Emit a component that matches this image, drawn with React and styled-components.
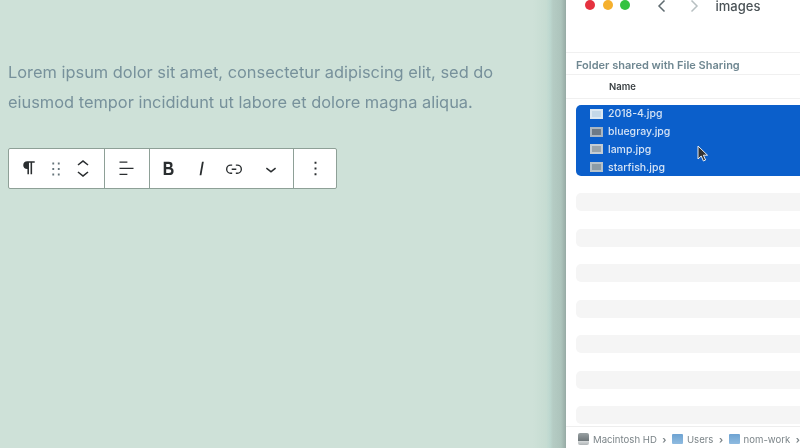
import React from "react";
import styled, { createGlobalStyle } from "styled-components";

const GlobalStyle = createGlobalStyle`
  html, body { margin: 0; padding: 0; height: 100%; overflow: hidden; }
  #root { height: 100%; }
  body { font-family: "Inter", "Liberation Sans", sans-serif; }
`;

const icons = {
  pilcrow: "M10 17.5h1.5v-11H13v11h1.5v-11H17V5H9.8C7.6 5 6 6.6 6 8.8s1.6 3.7 3.8 3.7h.2v5z",
  drag: "M8 7h2V5H8v2zm0 6h2v-2H8v2zm0 6h2v-2H8v2zm6-14v2h2V5h-2zm0 8h2v-2h-2v2zm0 6h2v-2h-2v2z",
  align: "M13 5.5H4V4h9v1.5Zm7 7H4V11h16v1.5Zm-7 7H4V18h9v1.5Z",
  bold: "M14.7 11.3c1-.6 1.5-1.6 1.5-3 0-2.3-1.3-3.4-4-3.4H7v14h5.8c1.4 0 2.5-.3 3.3-1 .8-.7 1.2-1.7 1.2-2.9.1-1.9-.8-3.1-2.6-3.7zm-5.1-4h2.3c.6 0 1.1.1 1.4.4.3.3.5.7.5 1.2s-.2 1-.5 1.2c-.3.3-.8.4-1.4.4H9.6V7.3zm4.6 9c-.4.3-1 .4-1.7.4H9.6v-3.9h2.9c.7 0 1.3.2 1.7.5.4.3.6.8.6 1.5s-.2 1.2-.6 1.5z",
  italic: "M12.5 5L10 19h1.9l2.5-14z",
  link: "M10 17.389H8.444A5.194 5.194 0 1 1 8.444 7H10v1.5H8.444a3.694 3.694 0 0 0 0 7.389H10v1.5ZM14 7h1.556a5.194 5.194 0 0 1 0 10.39H14v-1.5h1.556a3.694 3.694 0 0 0 0-7.39H14V7Zm-4.5 6h5v-1.5h-5V13Z",
  down: "M17.5 11.6L12 16l-5.5-4.4.9-1.2L12 14l4.5-3.6 1 1.2z",
  more: "M13 19h-2v-2h2v2zm0-6h-2v-2h2v2zm0-6h-2V5h2v2z",
  moveUp: "M6.5 7.4L12 3l5.5 4.4-.9 1.2L12 5l-4.5 3.6-1-1.2z",
  moveDown: "M17.5 14.6L12 19l-5.5-4.4.9-1.2L12 17l4.5-3.6 1 1.2z",
};

const Icon = ({ d, size = 24, color = "#2a2e30" }) => (
  <svg width={size} height={size} viewBox="0 0 24 24" fill={color}>
    <path d={d} />
  </svg>
);

const files = [
  { name: "2018-4.jpg", tone: "#dbe8f2", core: "#c3d8e8" },
  { name: "bluegray.jpg", tone: "#a9b6c2", core: "#6d7a86" },
  { name: "lamp.jpg", tone: "#c4cdd4", core: "#9aa5ac" },
  { name: "starfish.jpg", tone: "#b6c2ca", core: "#8b9ba5" },
];

export default function App() {
  return (
    <Page>
      <GlobalStyle />
      <Editor>
        <Paragraph>
          Lorem ipsum dolor sit amet, consectetur adipiscing elit, sed do eiusmod tempor incididunt ut labore et dolore
          magna aliqua.
        </Paragraph>
        <Toolbar>
          <Segment $width={96} $pad={6}>
            <ToolButton $width={28}><Icon d={icons.pilcrow} size={25} /></ToolButton>
            <ToolButton $width={26}><Icon d={icons.drag} size={22} color="#66757b" /></ToolButton>
            <MoverButton>
              <Icon d={icons.moveUp} />
              <MoverDown><Icon d={icons.moveDown} /></MoverDown>
            </MoverButton>
          </Segment>
          <Segment $width={45}>
            <ToolButton $width={42}><Icon d={icons.align} size={21} /></ToolButton>
          </Segment>
          <Segment $width={144} $pad={2}>
            <ToolButton $width={33}><Icon d={icons.bold} size={23} /></ToolButton>
            <ToolButton $width={33}><Icon d={icons.italic} size={23} /></ToolButton>
            <ToolButton $width={32}><Icon d={icons.link} size={22} /></ToolButton>
            <ToolButton $width={41}><Icon d={icons.down} size={22} /></ToolButton>
          </Segment>
          <Segment $width={42} $last>
            <ToolButton $width={42}><Icon d={icons.more} size={23} /></ToolButton>
          </Segment>
        </Toolbar>
      </Editor>
      <WindowShadow />
      <FinderWindow>
        <TitleBar>
          <Light $color="#e5323f" />
          <Light $color="#f5b02e" />
          <Light $color="#34c240" />
          <NavButtons>
            <svg width="12" height="14" viewBox="0 0 12 14" fill="none" stroke="#5f6b70" strokeWidth="1.5">
              <path d="M8.5 1.5 3 7l5.5 5.5" />
            </svg>
            <svg width="12" height="14" viewBox="0 0 12 14" fill="none" stroke="#b8c0c2" strokeWidth="1.5">
              <path d="M3.5 1.5 9 7l-5.5 5.5" />
            </svg>
          </NavButtons>
          <WindowTitle>images</WindowTitle>
        </TitleBar>
        <SharedBar>Folder shared with File Sharing</SharedBar>
        <ColumnHead>Name</ColumnHead>
        <Selection>
          {files.map((file) => (
            <FileRow key={file.name}>
              <Thumb $tone={file.tone} $core={file.core} />
              {file.name}
            </FileRow>
          ))}
          <Pointer width="12" height="17" viewBox="0 0 12 17">
            <path d="M1 1v13l3.2-3 2.2 5 2.2-1-2.2-4.8H10.500z" fill="#333" stroke="#e8eef4" strokeWidth="1" />
          </Pointer>
        </Selection>
        <Stripes>
          {[0, 1, 2, 3, 4, 5, 6].map((i) => (
            <Stripe key={i} />
          ))}
        </Stripes>
        <PathBar>
          <DriveIcon />
          <PathName>Macintosh HD</PathName>
          <PathArrow>›</PathArrow>
          <FolderIcon />
          <PathName>Users</PathName>
          <PathArrow>›</PathArrow>
          <FolderIcon />
          <PathName>nom-work</PathName>
          <PathArrow>›</PathArrow>
        </PathBar>
      </FinderWindow>
    </Page>
  );
}

const Page = styled.div`
  display: flex;
  width: 800px;
  height: 448px;
  overflow: hidden;
  background: #cee1d8;
  filter: blur(0.35px);
`;
const Editor = styled.div`
  width: 533px;
  flex-shrink: 0;
  padding: 57px 0 0 8px;
  box-sizing: border-box;
`;
const Paragraph = styled.p`
  margin: 0 0 31px;
  width: 500px;
  font-size: 16.4px;
  line-height: 30px;
  color: #77919b;
`;
const Toolbar = styled.div`
  display: flex;
  width: 329px;
  height: 41px;
  background: #fff;
  border: 1px solid #8ea097;
  border-radius: 2px;
  box-sizing: border-box;
`;
const Segment = styled.div`
  display: flex;
  align-items: center;
  width: ${(p) => p.$width}px;
  padding-left: ${(p) => p.$pad || 0}px;
  flex-shrink: 0;
  box-sizing: border-box;
  border-right: ${(p) => (p.$last ? "none" : "1px solid #8ea097")};
`;
const ToolButton = styled.div`
  display: flex;
  justify-content: center;
  align-items: center;
  flex-shrink: 0;
  width: ${(p) => p.$width}px;
  height: 100%;
`;
const MoverButton = styled.div`
  position: relative;
  display: flex;
  justify-content: center;
  align-items: center;
  width: 27px;
  height: 100%;
`;
const MoverDown = styled.div`
  position: absolute;
  left: 1.5px;
  top: 9px;
`;
const WindowShadow = styled.div`
  width: 33px;
  flex-shrink: 0;
  background: linear-gradient(
    90deg,
    #cee1d8 0%,
    #c6dcd2 40%,
    #bcd7cf 52%,
    #b5ccc4 60%,
    #adc4bc 85%,
    #96aaa4 100%
  );
`;
const FinderWindow = styled.div`
  flex: 1;
  display: flex;
  flex-direction: column;
  background: #fff;
  min-width: 0;
`;
const TitleBar = styled.div`
  display: flex;
  align-items: flex-start;
  height: 53px;
  padding: 0 0 0 19px;
  box-sizing: border-box;
  border-bottom: 1px solid #f0f0f0;
`;
const Light = styled.span`
  width: 10px;
  height: 10px;
  margin-right: 7.5px;
  border-radius: 50%;
  background: ${(p) => p.$color};
`;
const NavButtons = styled.div`
  display: flex;
  gap: 20px;
  margin: -1px 0 0 18px;
`;
const WindowTitle = styled.div`
  margin: 0 0 0 16px;
  font-size: 13px;
  line-height: 12px;
  font-weight: 500;
  color: #4b5357;
`;
const SharedBar = styled.div`
  height: 22px;
  padding: 3px 0 0 10px;
  line-height: 19px;
  font-size: 11px;
  font-weight: 600;
  color: #6f8791;
  border-bottom: 1px solid #f0f0f0;
  box-sizing: border-box;
`;
const ColumnHead = styled.div`
  height: 24px;
  padding-left: 43px;
  line-height: 24px;
  font-size: 9.5px;
  font-weight: 600;
  color: #3c4245;
  border-bottom: 1px solid #f0f0f0;
  box-sizing: border-box;
`;
const Selection = styled.div`
  position: relative;
  margin: 6px 0 0 10px;
  height: 71px;
  background: #0b5fcb;
  border-radius: 5px 0 0 5px;
`;
const FileRow = styled.div`
  display: flex;
  align-items: center;
  gap: 5px;
  height: 17.75px;
  padding-left: 14px;
  font-size: 10.5px;
  font-weight: 500;
  color: #d5e3f5;
`;
const Thumb = styled.span`
  width: 13px;
  height: 10px;
  background: ${(p) => p.$core};
  border: 2px solid ${(p) => p.$tone};
  box-sizing: border-box;
`;
const Pointer = styled.svg`
  position: absolute;
  left: 121px;
  top: 40px;
`;
const Stripes = styled.div`
  display: flex;
  flex-direction: column;
  gap: 17.5px;
  flex: 1;
  margin: 17px 0 0 10px;
  min-height: 0;
  overflow: hidden;
`;
const Stripe = styled.div`
  flex-shrink: 0;
  height: 18px;
  background: #f5f5f5;
  border-radius: 5px 0 0 5px;
`;
const PathBar = styled.div`
  display: flex;
  align-items: center;
  height: 22px;
  padding: 3px 0 0 12px;
  font-size: 9.6px;
  color: #7b8488;
  border-top: 1px solid #eeeeee;
  box-sizing: border-box;
  flex-shrink: 0;
  white-space: nowrap;
  overflow: hidden;
`;
const DriveIcon = styled.span`
  flex-shrink: 0;
  width: 11px;
  height: 12px;
  margin-right: 4px;
  border-radius: 2px;
  background: linear-gradient(180deg, #99a1a3 0%, #6f777a 65%, #d9dcdd 66%, #aeb3b5 100%);
`;
const FolderIcon = styled.span`
  flex-shrink: 0;
  width: 11px;
  height: 10px;
  margin-right: 4px;
  border-radius: 1px;
  background: linear-gradient(180deg, #6ea3d2 0%, #8fbbe0 100%);
`;
const PathName = styled.span`
  flex-shrink: 0;
`;
const PathArrow = styled.span`
  flex-shrink: 0;
  margin: 0 5.5px;
  font-weight: 700;
`;
